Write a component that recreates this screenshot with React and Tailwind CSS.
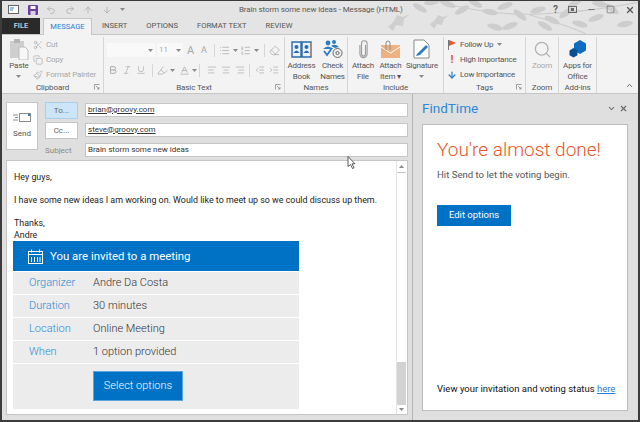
import React from 'react';
import { Scissors, Copy, Paintbrush, Undo2, Redo2, ArrowUp, ArrowDown, Search, ChevronUp, ChevronDown, X, Minus, Square, Bold, Italic, Underline, List, ListOrdered, AlignLeft, AlignCenter, AlignRight, Outdent, Indent, Eraser, Highlighter, Baseline } from 'lucide-react';

const Caret = ({ className = '' }) => (
  <svg width="5" height="3" viewBox="0 0 5 3" className={`shrink-0 ${className}`}><path d="M0 0h5L2.5 3z" fill="#8a8a8a" /></svg>
);

const Launcher = () => (
  <svg width="6" height="6" viewBox="0 0 6 6" className="absolute right-[3px] bottom-[3px]">
    <path d="M0.5 5.5V0.5H5.5M2 2l3 3M5 3v2H3" fill="none" stroke="#8a8a8a" strokeWidth="0.8" />
  </svg>
);

const Sep = ({ className = '' }) => <span className={`w-px h-[13px] bg-[#d6d6d6] shrink-0 ${className}`} />;

function Group({ w, label, launcher, children }) {
  return (
    <div className={`relative flex flex-col shrink-0 h-full border-r border-[#d6d6d6] ${w}`}>
      <div className="flex-1 flex min-h-0">{children}</div>
      <div className="h-[10px] text-center text-[8px] leading-[10px] tracking-[-0.1px] text-[#555]">{label}</div>
      {launcher && <Launcher />}
    </div>
  );
}

function BigButton({ icon, lines, w, disabled, caret }) {
  return (
    <div className={`flex flex-col items-center shrink-0 ${w}`}>
      <div className="h-[22px] mt-px flex items-center justify-center">{icon}</div>
      <div className={`text-center text-[8px] tracking-[-0.2px] leading-[10.5px] mt-[1px] ${disabled ? 'text-[#a8a8a8]' : 'text-[#555]'}`}>
        {lines.map((l) => <div key={l} className="whitespace-nowrap">{l}</div>)}
        {caret && <div className="h-[10px] flex items-center justify-center"><Caret /></div>}
      </div>
    </div>
  );
}

const SmallRow = ({ icon, children, muted, caret }) => (
  <div className={`flex items-center gap-[2px] h-[15px] shrink-0 text-[8px] tracking-[-0.2px] whitespace-nowrap ${muted ? 'text-[#a8a8a8]' : 'text-[#555]'}`}>
    <span className="w-[12px] flex justify-center">{icon}</span>
    {children}
    {caret && <Caret className="ml-[2px]" />}
  </div>
);

const grayIcon = { size: 10, color: '#a9a9a9', strokeWidth: 1.6 };

function Branches() {
  // leaf pattern in the title bar corner
  const leaves = [
    [448, 4, 20], [462, 10, -30], [475, 3, 30], [490, 12, 10], [505, 6, -20], [520, 15, 40],
    [538, 10, -15], [552, 20, 25], [566, 13, -35], [580, 24, 15], [596, 18, -20], [612, 9, 35],
    [625, 24, -10], [600, 4, 10], [575, 3, -30], [545, 26, 30], [510, 26, -20], [495, 27, 15],
    [432, 2, -10], [420, 8, 30],
  ];
  return (
    <svg width="640" height="34" viewBox="0 0 640 34" className="absolute left-0 top-0 pointer-events-none">
      <path d="M440 2Q490 16 540 14T640 2M530 15Q570 26 586 34" fill="none" stroke="#cbcbcb" strokeWidth="1.2" />
      {leaves.map(([x, y, r]) => (
        <ellipse key={`${x}-${y}`} cx={x} cy={y} rx="8" ry="3" fill="#cdcdcd" transform={`rotate(${r} ${x} ${y})`} />
      ))}
      <path d="M388 27l6-6 3-6 6 2 7-3-6 5-1 7-7-1-3 6z" fill="#cfcfcf" />
      <path d="M430 24l5-4 3-5 5 2 6-2-5 4-2 6-5-1-3 5z" fill="#cfcfcf" />
    </svg>
  );
}

const rows = [
  ['Organizer', 'Andre Da Costa'],
  ['Duration', '30 minutes'],
  ['Location', 'Online Meeting'],
  ['When', '1 option provided'],
];

export default function App() {
  return (
    <div className="relative w-[640px] h-[422px] overflow-hidden bg-[#dfdfdf] font-['Roboto',sans-serif] border-l-2 border-r-2 border-t border-b-2 border-[#3c3c3c] flex flex-col">
      {/* Title bar + tabs */}
      <div className="relative h-[33px] shrink-0 bg-[#e4e4e4]">
        <div className="absolute inset-0 -ml-[2px] -mt-[1px]"><Branches /></div>
        <div className="relative h-[17px] flex items-center pl-[6px] gap-[8.5px]">
          <svg width="11" height="9" viewBox="0 0 11 9"><rect x="0.5" y="0.5" width="10" height="8" fill="#fff" stroke="#666" /><path d="M2 3h4M2 5h3" stroke="#3b82c4" /></svg>
          <svg width="10" height="10" viewBox="0 0 10 10"><rect width="10" height="10" rx="1" fill="#6b3fa0" /><rect x="2.5" y="1" width="5" height="3" fill="#fff" /><rect x="2.5" y="6" width="5" height="4" fill="#d9d0e6" /></svg>
          <Undo2 size={10} color="#b0b0b0" />
          <Redo2 size={10} color="#b0b0b0" />
          <ArrowUp size={10} color="#b0b0b0" />
          <ArrowDown size={10} color="#b0b0b0" />
          <Caret />
          <div className="absolute left-[237px] top-[2px] text-[8px] tracking-[-0.12px] leading-[14px] text-[#5a5a5a] whitespace-nowrap">Brain storm some new ideas - Message (HTML)</div>
          <div className="ml-auto mr-[3px] flex items-center gap-[10px]">
            <span className="text-[10px] font-bold text-[#666]">?</span>
            <svg width="9" height="7" viewBox="0 0 9 7"><rect x="0.5" y="0.5" width="8" height="6" fill="none" stroke="#666" /><rect x="3" y="2" width="3" height="3" fill="#666" /></svg>
            <Minus size={9} color="#666" strokeWidth={2.4} />
            <Square size={9} color="#666" strokeWidth={1.8} />
            <X size={10} color="#555" strokeWidth={3} />
          </div>
        </div>
        <div className="relative flex h-[16px] items-end text-[7.6px] text-[#555]">
          <div className="w-[38px] h-[16px] bg-[#2a2a2a] text-white flex items-center justify-center">FILE</div>
          <div className="ml-[3px] w-[49px] h-[17px] bg-[#f3f3f3] border-x border-t border-[#c6c6c6] text-[#2b7cd3] flex items-center justify-center -mb-[1px]">MESSAGE</div>
          <div className="h-[16px] flex items-center gap-[19px] ml-[10px] whitespace-nowrap">
            <span>INSERT</span><span>OPTIONS</span><span>FORMAT TEXT</span><span>REVIEW</span>
          </div>
        </div>
      </div>

      {/* Ribbon */}
      <div className="h-[60px] shrink-0 bg-[#f3f3f3] border-y border-[#c6c6c6] flex pt-[2px] text-[#555]">
        <Group w="w-[102px]" label="Clipboard" launcher>
          <BigButton
            w="w-[34px]"
            lines={['Paste']}
            caret
            icon={
              <svg width="19" height="21" viewBox="0 0 19 21">
                <rect x="0" y="2" width="14" height="17" fill="#cfcfcf" />
                <rect x="4" y="0" width="6" height="4" fill="#b5b5b5" />
                <path d="M9 8h6l3 3v10H9z" fill="#f7f7f7" stroke="#bdbdbd" />
              </svg>
            }
          />
          <div className="flex flex-col -ml-[4px]">
            <SmallRow muted icon={<Scissors {...grayIcon} />}>Cut</SmallRow>
            <SmallRow muted icon={<Copy {...grayIcon} />}>Copy</SmallRow>
            <SmallRow muted icon={<Paintbrush {...grayIcon} />}>Format Painter</SmallRow>
          </div>
        </Group>
        <Group w="w-[181px]" label="Basic Text" launcher>
          <div className="flex flex-col gap-[6px] pl-[3px] pt-[6px]">
            <div className="flex items-center h-[14px]">
              <div className="w-[48px] h-[14px] bg-[#f9f9f9] flex items-center justify-end pr-[2px]"><Caret /></div>
              <div className="ml-[2px] w-[26px] h-[14px] bg-[#f9f9f9] flex items-center justify-between px-[2px] text-[8px] text-[#a8a8a8]">11<Caret /></div>
              <span className="ml-[4px] w-[7px] text-[11px] leading-none text-[#a8a8a8]">A</span>
              <span className="ml-[7px] w-[6px] text-[9px] leading-none text-[#a8a8a8]">A</span>
              <Sep className="ml-[7px]" />
              <List {...grayIcon} size={11} className="ml-[4px]" />
              <Caret className="ml-[3px]" />
              <ListOrdered {...grayIcon} size={11} className="ml-[2px]" />
              <Caret className="ml-[3px]" />
              <Sep className="ml-[5px]" />
              <Eraser {...grayIcon} size={11} className="ml-[4px]" />
            </div>
            <div className="flex items-center h-[14px]">
              <Bold {...grayIcon} strokeWidth={2.4} className="ml-[1px]" />
              <Italic {...grayIcon} className="ml-[4px]" />
              <Underline {...grayIcon} className="ml-[4px]" />
              <Sep className="ml-[6px]" />
              <Highlighter {...grayIcon} size={11} className="ml-[4px]" />
              <Caret className="ml-[2px]" />
              <Baseline {...grayIcon} size={11} className="ml-[4px]" />
              <Caret className="ml-[2px]" />
              <Sep className="ml-[2px]" />
              <AlignLeft {...grayIcon} className="ml-[7px]" />
              <AlignCenter {...grayIcon} className="ml-[4px]" />
              <AlignRight {...grayIcon} className="ml-[4px]" />
              <Sep className="ml-[4px]" />
              <Outdent {...grayIcon} className="ml-[5px]" />
              <Indent {...grayIcon} className="ml-[4px]" />
            </div>
          </div>
        </Group>
        <Group w="w-[63px]" label="Names">
          <BigButton
            w="w-[33px]"
            lines={['Address', 'Book']}
            icon={
              <svg width="21" height="19" viewBox="0 0 21 19">
                <path d="M1 2h9v15H1zM11 2h9v15h-9z" fill="#e9f2fa" stroke="#2b6ca8" strokeWidth="1.4" />
                <circle cx="5.5" cy="7" r="2" fill="#2b6ca8" />
                <path d="M2.5 13q3-5 6 0z" fill="#2b6ca8" />
                <circle cx="15.5" cy="7" r="2" fill="#2b6ca8" />
                <path d="M12.5 13q3-5 6 0z" fill="#2b6ca8" />
                <path d="M20 3v13" stroke="#e0863a" />
              </svg>
            }
          />
          <BigButton
            w="w-[29px]"
            lines={['Check', 'Names']}
            icon={
              <svg width="21" height="20" viewBox="0 0 21 20">
                <circle cx="6" cy="4" r="2.4" fill="#2b7cc4" />
                <circle cx="12" cy="3" r="2" fill="#2b7cc4" />
                <path d="M1 10q5-5 10 0zM9 7q4-3 8 1l-4 1z" fill="#2b7cc4" />
                <path d="M2 12l3 4 5-7" fill="none" stroke="#2b7cc4" strokeWidth="1.8" />
                <circle cx="15.5" cy="14" r="4.5" fill="none" stroke="#666" />
                <circle cx="15.5" cy="14" r="1.6" fill="none" stroke="#666" />
              </svg>
            }
          />
        </Group>
        <Group w="w-[96px]" label="Include">
          <BigButton
            w="w-[30px]"
            lines={['Attach', 'File']}
            icon={
              <svg width="9" height="19" viewBox="0 0 9 19" fill="none" stroke="#9a9a9a" strokeWidth="1.1">
                <path d="M6.5 5v9a2 2 0 0 1-4 0V3.5a2.8 2.8 0 0 1 5.6 0V14a3.6 3.6 0 0 1-7.2 0V5" />
              </svg>
            }
          />
          <BigButton
            w="w-[25px]"
            lines={['Attach', 'Item ▾']}
            icon={
              <svg width="19" height="19" viewBox="0 0 19 19">
                <rect y="5" width="19" height="13" fill="#eeb182" />
                <path d="M0 7l9.5 6L19 7" fill="none" stroke="#fff" />
                <path d="M5 10V3a2 2 0 0 1 4 0v7" fill="none" stroke="#8a8a8a" />
              </svg>
            }
          />
          <BigButton
            w="w-[38px]"
            lines={['Signature']}
            caret
            icon={
              <svg width="18" height="20" viewBox="0 0 18 20">
                <path d="M1 1h10l5 5v13H1z" fill="#fff" stroke="#8a8a8a" />
                <path d="M4 15L13 6l2 2-8 8-4 1z" fill="#2b7cc4" />
              </svg>
            }
          />
        </Group>
        <Group w="w-[82px]" label="Tags" launcher>
          <div className="flex flex-col pl-[2px]">
            <SmallRow caret icon={<svg width="8" height="10" viewBox="0 0 8 10"><path d="M0.5 0v10" stroke="#777" /><path d="M1 0l7 3-7 3z" fill="#e8562a" /></svg>}>Follow Up</SmallRow>
            <SmallRow icon={<span className="text-[11px] font-bold text-[#e8562a] leading-none">!</span>}>High Importance</SmallRow>
            <SmallRow icon={<ArrowDown size={10} color="#2b7cc4" strokeWidth={3} />}>Low Importance</SmallRow>
          </div>
        </Group>
        <Group w="w-[33px]" label="Zoom">
          <BigButton w="w-full" lines={['Zoom']} disabled icon={<Search size={19} color="#b0b0b0" strokeWidth={1.6} />} />
        </Group>
        <Group w="w-[38px]" label="Add-ins">
          <BigButton
            w="w-full"
            lines={['Apps for', 'Office']}
            icon={
              <svg width="18" height="18" viewBox="0 0 18 18">
                <path d="M11 0l6 3.5v7L11 14l-6-3.5v-7z" fill="#0f6cc0" />
                <path d="M4.5 8l4 2.4v4.8L4.5 17.6 0.5 15.2v-4.8z" fill="#0a4f90" />
              </svg>
            }
          />
        </Group>
        <div className="flex-1 flex items-end justify-end pr-[4px] pb-[3px]"><ChevronUp size={9} color="#666" strokeWidth={2.6} /></div>
      </div>

      {/* Compose + pane */}
      <div className="flex-1 flex min-h-0">
        <div className="w-[411px] shrink-0 border-r border-[#b5b5b5] flex flex-col pl-[4px] pr-[4px] pt-[8px] pb-[5px]">
          <div className="flex h-[58px] shrink-0">
            <div className="w-[32px] h-[48px] bg-white border border-[#c6c6c6] flex flex-col items-center pt-[10px] text-[8px] text-[#555]">
              <svg width="18" height="9" viewBox="0 0 18 9"><rect x="6.5" y="0.5" width="11" height="8" fill="#fff" stroke="#8a8a8a" /><path d="M0 2h5M2 4.5h3M0 7h5" stroke="#8a8a8a" /><rect x="15" y="1" width="2" height="2" fill="#2b7cc4" /></svg>
              <span className="mt-[6px]">Send</span>
            </div>
            <div className="w-[33px] ml-[7px] flex flex-col gap-[3px] text-[8px] text-[#666]">
              <div className="h-[17px] bg-[#cde6f7] border border-[#a9cfea] flex items-center justify-center">To...</div>
              <div className="h-[17px] bg-white border border-[#c6c6c6] flex items-center justify-center">Cc...</div>
              <div className="h-[14px] mt-[2px] text-[#8a8a8a] flex items-center">Subject</div>
            </div>
            <div className="flex-1 ml-[7px] mt-[1px] flex flex-col gap-[6px] text-[8px] text-[#333]">
              <div className="h-[14px] bg-white border border-[#c6c6c6] pl-[2px] leading-[11px] underline">brian@groovy.com</div>
              <div className="h-[14px] bg-white border border-[#c6c6c6] pl-[2px] leading-[11px] underline">steve@groovy.com</div>
              <div className="h-[14px] bg-white border border-[#c6c6c6] pl-[2px] leading-[11px]">Brain storm some new ideas</div>
            </div>
          </div>
          <div className="flex-1 flex min-h-0 bg-white border border-[#c6c6c6]">
            <div className="flex-1 pl-[7px] pt-[10px] text-[8.9px] leading-[12px] text-[#222]">
              <p>Hey guys,</p>
              <p className="mt-[11px] whitespace-nowrap">I have some new ideas I am working on. Would like to meet up so we could discuss up them.</p>
              <p className="mt-[11px]">Thanks,</p>
              <p>Andre</p>
              <div className="w-[286px] -ml-[1px] bg-[#ececec]">
                <div className="h-[30px] bg-[#0072c6] flex items-center pl-[15px] gap-[7px] text-white text-[11.4px]">
                  <svg width="15" height="15" viewBox="0 0 15 15" fill="none" stroke="#fff"><rect x="0.5" y="2.5" width="14" height="12" /><path d="M0.5 5.5h14M3.5 0.5v3M11.5 0.5v3M3.5 8v5M6.5 8v5M9.5 8v5M12 8v5" /></svg>
                  You are invited to a meeting
                </div>
                {rows.map(([k, v]) => (
                  <div key={k} className="h-[23px] flex items-center border-t border-white pl-[16px] text-[11px] font-light">
                    <span className="w-[64px] text-[#2b8ad6]">{k}</span>
                    <span className="text-[#333]">{v}</span>
                  </div>
                ))}
                <div className="h-[46px] border-t border-white pl-[80px] pt-[7px]">
                  <div className="w-[90px] h-[30px] bg-[#0072c6] border border-[#5aa5dc] text-white text-[11px] font-light flex items-center justify-center">Select options</div>
                </div>
              </div>
            </div>
            <div className="w-[10px] shrink-0 flex flex-col bg-[#d2d2d2] border-l border-[#e4e4e4] mr-[1px]">
              <div className="h-[12px] bg-white border-b border-[#c6c6c6] flex items-center justify-center"><Caret className="rotate-180" /></div>
              <div className="h-[189px] bg-white" />
              <div className="flex-1" />
              <div className="h-[9px] bg-white flex items-center justify-center"><Caret /></div>
            </div>
          </div>
        </div>

        <div className="flex-1 flex flex-col pl-[9px] pr-[10px] pb-[9px]">
          <div className="h-[31px] shrink-0 flex items-center text-[13.5px] text-[#2b8ad6] -mt-[1px]">
            FindTime
            <ChevronDown size={9} color="#777" strokeWidth={3} className="ml-auto mr-[3px]" />
            <X size={9} color="#666" strokeWidth={3} />
          </div>
          <div className="flex-1 bg-white border border-[#bdbdbd] flex flex-col pl-[14px] pt-[12px]">
            <div className="text-[19px] leading-[26px] font-light text-[#e8562a] whitespace-nowrap">You're almost done!</div>
            <div className="mt-[5px] text-[9.6px] leading-[14px] text-[#555]">Hit Send to let the voting begin.</div>
            <div className="mt-[23px] w-[74px] h-[21px] bg-[#0072c6] text-white text-[9.5px] flex items-center justify-center">Edit options</div>
            <div className="mt-auto mb-[14px] text-[9.5px] leading-[14px] text-[#111] whitespace-nowrap">
              View your invitation and voting status <span className="text-[#2b7cd3] underline">here</span>
            </div>
          </div>
        </div>
      </div>

      {/* mouse pointer */}
      <svg width="9" height="13" viewBox="0 0 9 13" className="absolute left-[345px] top-[155px]">
        <path d="M1 0.5v10l2.5-2 2 4 1.5-.7-2-4H8z" fill="#fff" stroke="#333" strokeWidth="0.8" />
      </svg>
    </div>
  );
}
